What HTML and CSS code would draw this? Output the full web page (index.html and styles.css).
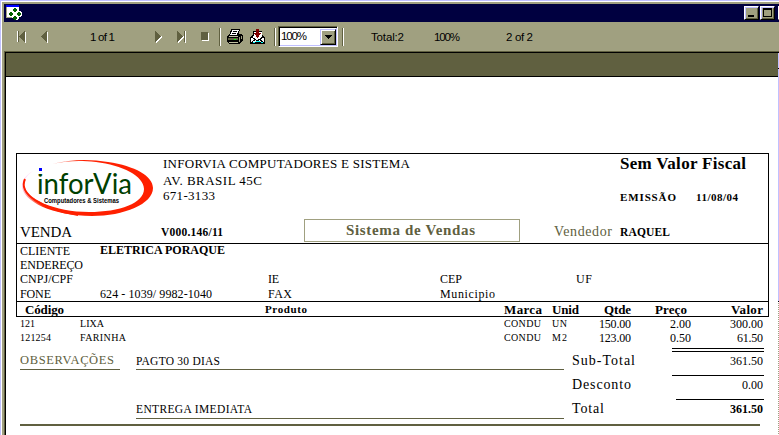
FILE: index.html
```html
<!DOCTYPE html>
<html lang="pt-BR">
<head>
<meta charset="utf-8">
<title>Sistema de Vendas</title>
<link rel="stylesheet" href="styles.css">
</head>
<body>
<div class="window">
  <header class="titlebar">
    <svg class="app-icon" width="18" height="17" shape-rendering="crispEdges"><path d="M2 1h13v12H2z" fill="#fff"/><path d="M2 1h13v2H2z" fill="#00f"/><path d="M2 3h1v11H2zM2 13h9v1H2z" fill="#a0a080"/><path d="M10 3h3l2 2v2h1l2 2v2l-2 2h-1v1l-2 2h-3l-2-2v-5h2V5z" fill="#fff"/><path d="M10 4h2v1h1v2h-1v1h-2V7H9V5h1zM6 8h2v1h1v2H8v1H6v-1H5V9h1zM14 8h2v1h1v2h-1v1h-2v-1h-1V9h1zM10 12h2v1h1v2h-1v1h-2v-1H9v-2h1z" fill="#006000"/></svg>
    <div class="caption">
      <span class="cap"><svg width="13" height="11" shape-rendering="crispEdges"><path d="M3 8h6v2H3z"/></svg></span>
      <span class="cap"><svg width="13" height="11" shape-rendering="crispEdges"><path d="M2 1h9v9H2zm1 2v6h7V3z" fill-rule="evenodd"/></svg></span>
      <span class="cap"></span>
    </div>
  </header>
  <nav class="toolbar">
    <svg width="9" height="12" shape-rendering="crispEdges"><path d="M0 0h1v11H0zM8 1h1v11H8z" fill="#fff"/><path d="M1 0h1v11H1zM8 0v11L2 5.500z" fill="#606040"/></svg>
    <svg width="7" height="12" shape-rendering="crispEdges"><path d="M6 1h1v11H6z" fill="#fff"/><path d="M6 0v11L0 5.500z" fill="#606040"/></svg>
    <span data-w="25">1 of 1</span>
    <svg width="9" height="12" shape-rendering="crispEdges"><path d="M2 11.500L8 5.500" stroke="#fff" stroke-width="2"/><path d="M1 0v11L7 5.500z" fill="#606040"/></svg>
    <svg width="10" height="12" shape-rendering="crispEdges"><path d="M1 11.500L7 5.500" stroke="#fff" stroke-width="2"/><path d="M8 0h1v12H8z" fill="#fff"/><path d="M0 0v11L6 5.500zM7 0h1v11H7z" fill="#606040"/></svg>
    <svg width="8" height="9" shape-rendering="crispEdges"><path d="M1 1h7v8H1z" fill="#fff"/><path d="M0 0h7v8H0z" fill="#606040"/></svg>
    <i class="sep"></i>
    <svg width="18" height="16" shape-rendering="crispEdges"><path d="M5 0h9v2h-1v3h2l2 2v4l-3 4H4l-3-2V7l3-3z"/><path d="M6 1h7v1h-1v2h-1v2H4V5h1V3h1z" fill="#fff"/><path d="M7 2h4v1H7zM6 4h4v1H6z"/><path d="M3 7h9v1H3zM3 13h9v1H3z" fill="#c0c0a0"/><path d="M2 9h10v2H2z" fill="#606040"/><path d="M8 10h2v1H8z" fill="#0f0"/><path d="M13 8h1v5h-1zM15 7h1v3h-1z" fill="#a0a080"/></svg>
    <svg width="16" height="16" shape-rendering="crispEdges"><path d="M3 2h9v4l3 2v7H0V8l3-2z"/><path d="M4 3h8v5l2 1v4H1V9l3-2z" fill="#fff"/><path d="M2 8l5 4 6-4M2 13l4-3M13 13l-4-3" fill="none" stroke="#000"/><path d="M6 12h4v1H6zM3 13h2v1H3zM11 13h2v1h-2z" fill="#0ff"/><path d="M6 0h3v4h2v1h-1v1H9v2H8v1H7V8H6V6H5V5H4V4h2z" fill="#800000"/></svg>
    <i class="sep"></i>
    <div class="combo"><span data-w="26">100%</span><b><svg width="7" height="4" shape-rendering="crispEdges"><path d="M0 0h7v1H6v1H5v1H4v1H3V3H2V2H1V1H0z"/></svg></b></div>
    <i class="sep"></i>
    <span data-w="33">Total:2</span>
    <span data-w="26">100%</span>
    <span data-w="27">2 of 2</span>
  </nav>
  <div class="viewer">
    <div class="strip"></div>
    <main class="report">
      <section class="box">
        <div class="head">
          <svg class="logo" width="146" height="64" viewBox="17 155 146 64">
            <defs><linearGradient id="swoosh" gradientUnits="userSpaceOnUse" x1="38" y1="160" x2="92" y2="196"><stop offset="0" stop-color="#ffd8f8"/><stop offset=".3" stop-color="#ff7060"/><stop offset=".5" stop-color="#ff2000"/></linearGradient></defs>
            <path d="M52 164C72 159 90 159 108 162C135 166 153 176 153 188C153 204 124 216 92 216C53 216 22 201 22 186C22 180 26 175 33 171C26 176 24 180 24 184C25 199 55 212 89 212C120 212 144 203 144 189C144 176 122 165 96 162C78 160 67 161 52 164z" fill="url(#swoosh)"/>
            <path d="M25 179C18 194 42 209 78 215" fill="none" stroke="#ff2000" stroke-width="2"/>
            <text class="brand" x="37" y="194" textLength="95" lengthAdjust="spacingAndGlyphs">inforVia</text>
            <path d="M38 167h5v7h-5z" fill="#fff"/><path d="M39 168h3v3h-3z" fill="#00f"/>
            <text class="tagline" x="44" y="203" textLength="75" lengthAdjust="spacingAndGlyphs">Computadores &amp; Sistemas</text>
          </svg>
          <div class="company">
            <div><span data-w="247">INFORVIA COMPUTADORES E SISTEMA</span></div>
            <div><span data-w="99">AV. BRASIL 45C</span></div>
            <div><span data-w="52">671-3133</span></div>
          </div>
          <div class="issue">
            <div class="fiscal"><span data-w="126">Sem Valor Fiscal</span></div>
            <div class="date"><span data-w="56">EMISSÃO</span><span data-w="42">11/08/04</span></div>
          </div>
        </div>
        <div class="sale">
          <span class="label" data-w="52">VENDA</span>
          <b data-w="62">V000.146/11</b>
          <div class="system"><span data-w="129">Sistema de Vendas</span></div>
          <span class="seller" data-w="58">Vendedor</span>
          <b data-w="50">RAQUEL</b>
        </div>
        <div class="client">
          <div class="line"><span data-w="50">CLIENTE</span><b data-w="125">ELETRICA PORAQUE</b></div>
          <div class="line"><span data-w="63">ENDEREÇO</span></div>
          <div class="line"><span data-w="53">CNPJ/CPF</span><span></span><span data-w="11">IE</span><span data-w="22">CEP</span><span data-w="16">UF</span></div>
          <div class="line last"><span data-w="31">FONE</span><span data-w="112">624 - 1039/ 9982-1040</span><span data-w="24">FAX</span><span data-w="55">Municipio</span></div>
        </div>
        <div class="cols">
          <span data-w="39">Código</span><span class="product" data-w="42">Produto</span><span data-w="38">Marca</span><span data-w="27">Unid</span><span class="num" data-w="27">Qtde</span><span class="price" data-w="32">Preço</span><span class="num" data-w="32">Valor</span>
        </div>
      </section>
      <section class="items">
        <div class="item"><span data-w="15">121</span><span data-w="24">LIXA</span><span data-w="37">CONDU</span><span data-w="15">UN</span><span class="num" data-w="32">150.00</span><span class="num" data-w="21">2.00</span><span class="num" data-w="33">300.00</span></div>
        <div class="item"><span data-w="31">121254</span><span data-w="46">FARINHA</span><span data-w="37">CONDU</span><span data-w="15">M2</span><span class="num" data-w="32">123.00</span><span class="num" data-w="21">0.50</span><span class="num" data-w="26">61.50</span></div>
      </section>
      <section class="summary">
        <div class="obs"><span data-w="94">OBSERVAÇÕES</span></div>
        <div class="notes">
          <div class="note"><span data-w="84">PAGTO 30 DIAS</span></div>
          <div class="note second"><span data-w="116">ENTREGA IMEDIATA</span></div>
        </div>
        <div class="labels">
          <div><span data-w="63">Sub-Total</span></div>
          <div><span data-w="59">Desconto</span></div>
          <div><span data-w="32">Total</span></div>
        </div>
        <div class="values">
          <div class="sub"><span data-w="33">361.50</span></div>
          <div><span data-w="21">0.00</span></div>
          <div class="total"><span data-w="33">361.50</span></div>
        </div>
      </section>
      <div class="rule"></div>
    </main>
    <aside class="edge"></aside>
  </div>
</div>
<script src="tracking.js"></script>
</body>
</html>
```
FILE: styles.css
```css
* { box-sizing: border-box; }
body { margin: 0; overflow: hidden; background: #a0a080; }
svg { display: block; }
[data-w] { white-space: pre; }
.window { width: 779px; height: 435px; padding: 3px 0 0 3px; border-top: 1px solid #c0c0ff; border-left: 1px solid #c0c0ff; box-shadow: inset 1px 1px #fff; }
.titlebar { height: 18px; background: #000040; display: flex; justify-content: space-between; overflow: hidden; }
.caption { display: flex; padding-top: 2px; width: 35px; flex: none; }
.cap { flex: none; width: 15px; height: 14px; margin-right: 1px; background: #a0a080; border: 1px solid; border-color: #fff #000 #000 #fff; box-shadow: inset 1px 1px #c0c0ff, inset -1px -1px #606040; }
.cap:last-child { margin-left: 2px; }

.toolbar { height: 29px; display: grid; grid-template-columns: 24px 49px 64px 23px 24px 18px 7px 24px 24px 4px 64px 29px 63px 72px 80px; padding-left: 13px; align-items: center; font: 11.5px/16px "Liberation Sans", sans-serif; color: #000; }
.toolbar > span { padding-top: 1px; }
.sep { width: 2px; height: 18px; border-left: 1px solid #606040; background: #fff; }
.combo { width: 60px; height: 21px; background: #fff; border: 1px solid; border-color: #606040 #fff #fff #606040; box-shadow: inset 1px 1px #000, inset -1px -1px #c0c0ff; display: flex; justify-content: space-between; padding: 2px 1px 1px 2px; line-height: 15px; }
.combo b { width: 16px; background: #a0a080; border: 1px solid; border-color: #c0c0ff #000 #000 #c0c0ff; box-shadow: inset 1px 1px #fff, inset -1px -1px #606040; display: grid; place-items: center; }

.viewer { height: 384px; display: grid; grid-template: 25px 1fr / 773px 1px; border-left: 1px solid #606040; border-top: 1px solid #606040; }
.strip { background: #606040; border: solid #000; border-width: 1px 0 1px 1px; }
.report { grid-row: 2; grid-column: 1; background: #fff; border-left: 1px solid #000; padding-top: 76px; color: #000; font: 12px/14px "Liberation Serif", serif; }
.edge { grid-row: 1 / 3; grid-column: 2; background: linear-gradient(#000 1px, #c0c0ff 1px 16px, #000 16px 17px, #c0c0ff 17px 249px, #000 249px 250px, transparent 250px), repeating-linear-gradient(#fff 0 1px, #a0a080 1px 2px); }

.box { margin-left: 10px; width: 753px; border: 1px solid #000; height: 164px; }
.head { height: 65px; display: grid; grid-template-columns: 146px 457px 1fr; }
.logo { margin-top: 1px; }
.brand { font: 29px "Lato", sans-serif; fill: #004000; }
.tagline { font: bold 7px "Liberation Sans", sans-serif; }
.company { font-size: 13px; line-height: 17px; padding-top: 1px; }
.company div:last-child { line-height: 13px; }
.fiscal { font-size: 17px; font-weight: bold; line-height: 20px; height: 18px; }
.date { display: grid; grid-template-columns: 76px 1fr; margin-top: 18px; font-size: 11px; font-weight: bold; }
.sale { height: 25px; display: grid; grid-template-columns: 141px 143px 250px 66px 1fr; padding-left: 3px; border-bottom: 1px solid #000; line-height: 26px; }
.label { font-size: 15px; }
.sale b { font-size: 11.5px; }
.system { width: 216px; height: 23px; border: 1px solid #a0a080; color: #606040; font-size: 15px; font-weight: bold; line-height: 21px; padding-left: 41px; }
.seller { color: #606040; font-size: 14px; }

.client { height: 57px; }
.line { height: 14px; display: grid; grid-template-columns: 80px 168px 172px 136px 1fr; padding-left: 3px; }
.line b { line-height: 12px; }
.last { line-height: 16px; }
.cols { height: 16px; border-top: 1px solid #000; display: grid; grid-template-columns: 240px 239px 48px 53px 26px 71px 61px; padding-left: 8px; font-size: 13px; font-weight: bold; line-height: 15px; }
.num { justify-self: end; }
.cols .product { font-size: 11px; }
.price { padding-left: 24px; }
.items { padding-left: 14px; }
.item { height: 14px; display: grid; grid-template-columns: 60px 424px 48px 47px 32px 60px 72px; font-size: 10px; }
.item .num { font-size: 12px; }

.summary { height: 79px; padding-left: 14px; display: grid; grid-template-columns: 100px 16px 428px 8px 100px 92px; }
.obs { height: 25px; padding-top: 8px; border-bottom: 1px solid #606040; color: #606040; font-size: 12.5px; line-height: 15px; }
.notes { grid-column: 3; font-size: 11.5px; line-height: 15px; }
.note { height: 25px; padding-top: 9px; border-bottom: 1px solid #606040; }
.second { height: 49px; padding-top: 32px; }
.labels { grid-column: 5; padding-top: 8px; font-size: 14px; line-height: 16px; display: grid; grid-auto-rows: 24px; }
.values { grid-column: 6; padding-top: 6px; text-align: right; line-height: 18px; }
.values div { height: 24px; border-top: 1px solid #000; padding-right: 1px; }
.values .sub { box-shadow: 0 -2px #fff, 0 -3px #000; }
.values .total { margin-left: 4px; font-weight: bold; }
.rule { width: 740px; height: 2px; margin-left: 14px; background: #606040; }
```
FILE: tracking.js
```js
// Spread each label's letters so that it fills its measured column width.
for (const el of document.querySelectorAll("[data-w]")) {
  const range = document.createRange();
  range.selectNodeContents(el);
  const natural = range.getBoundingClientRect().width;
  const gap = (el.dataset.w - natural) / (el.textContent.length - 1);
  el.style.letterSpacing = gap + "px";
  if (getComputedStyle(el).justifySelf === "end" || el.closest(".values")) el.style.marginRight = -gap + "px";
}
```
